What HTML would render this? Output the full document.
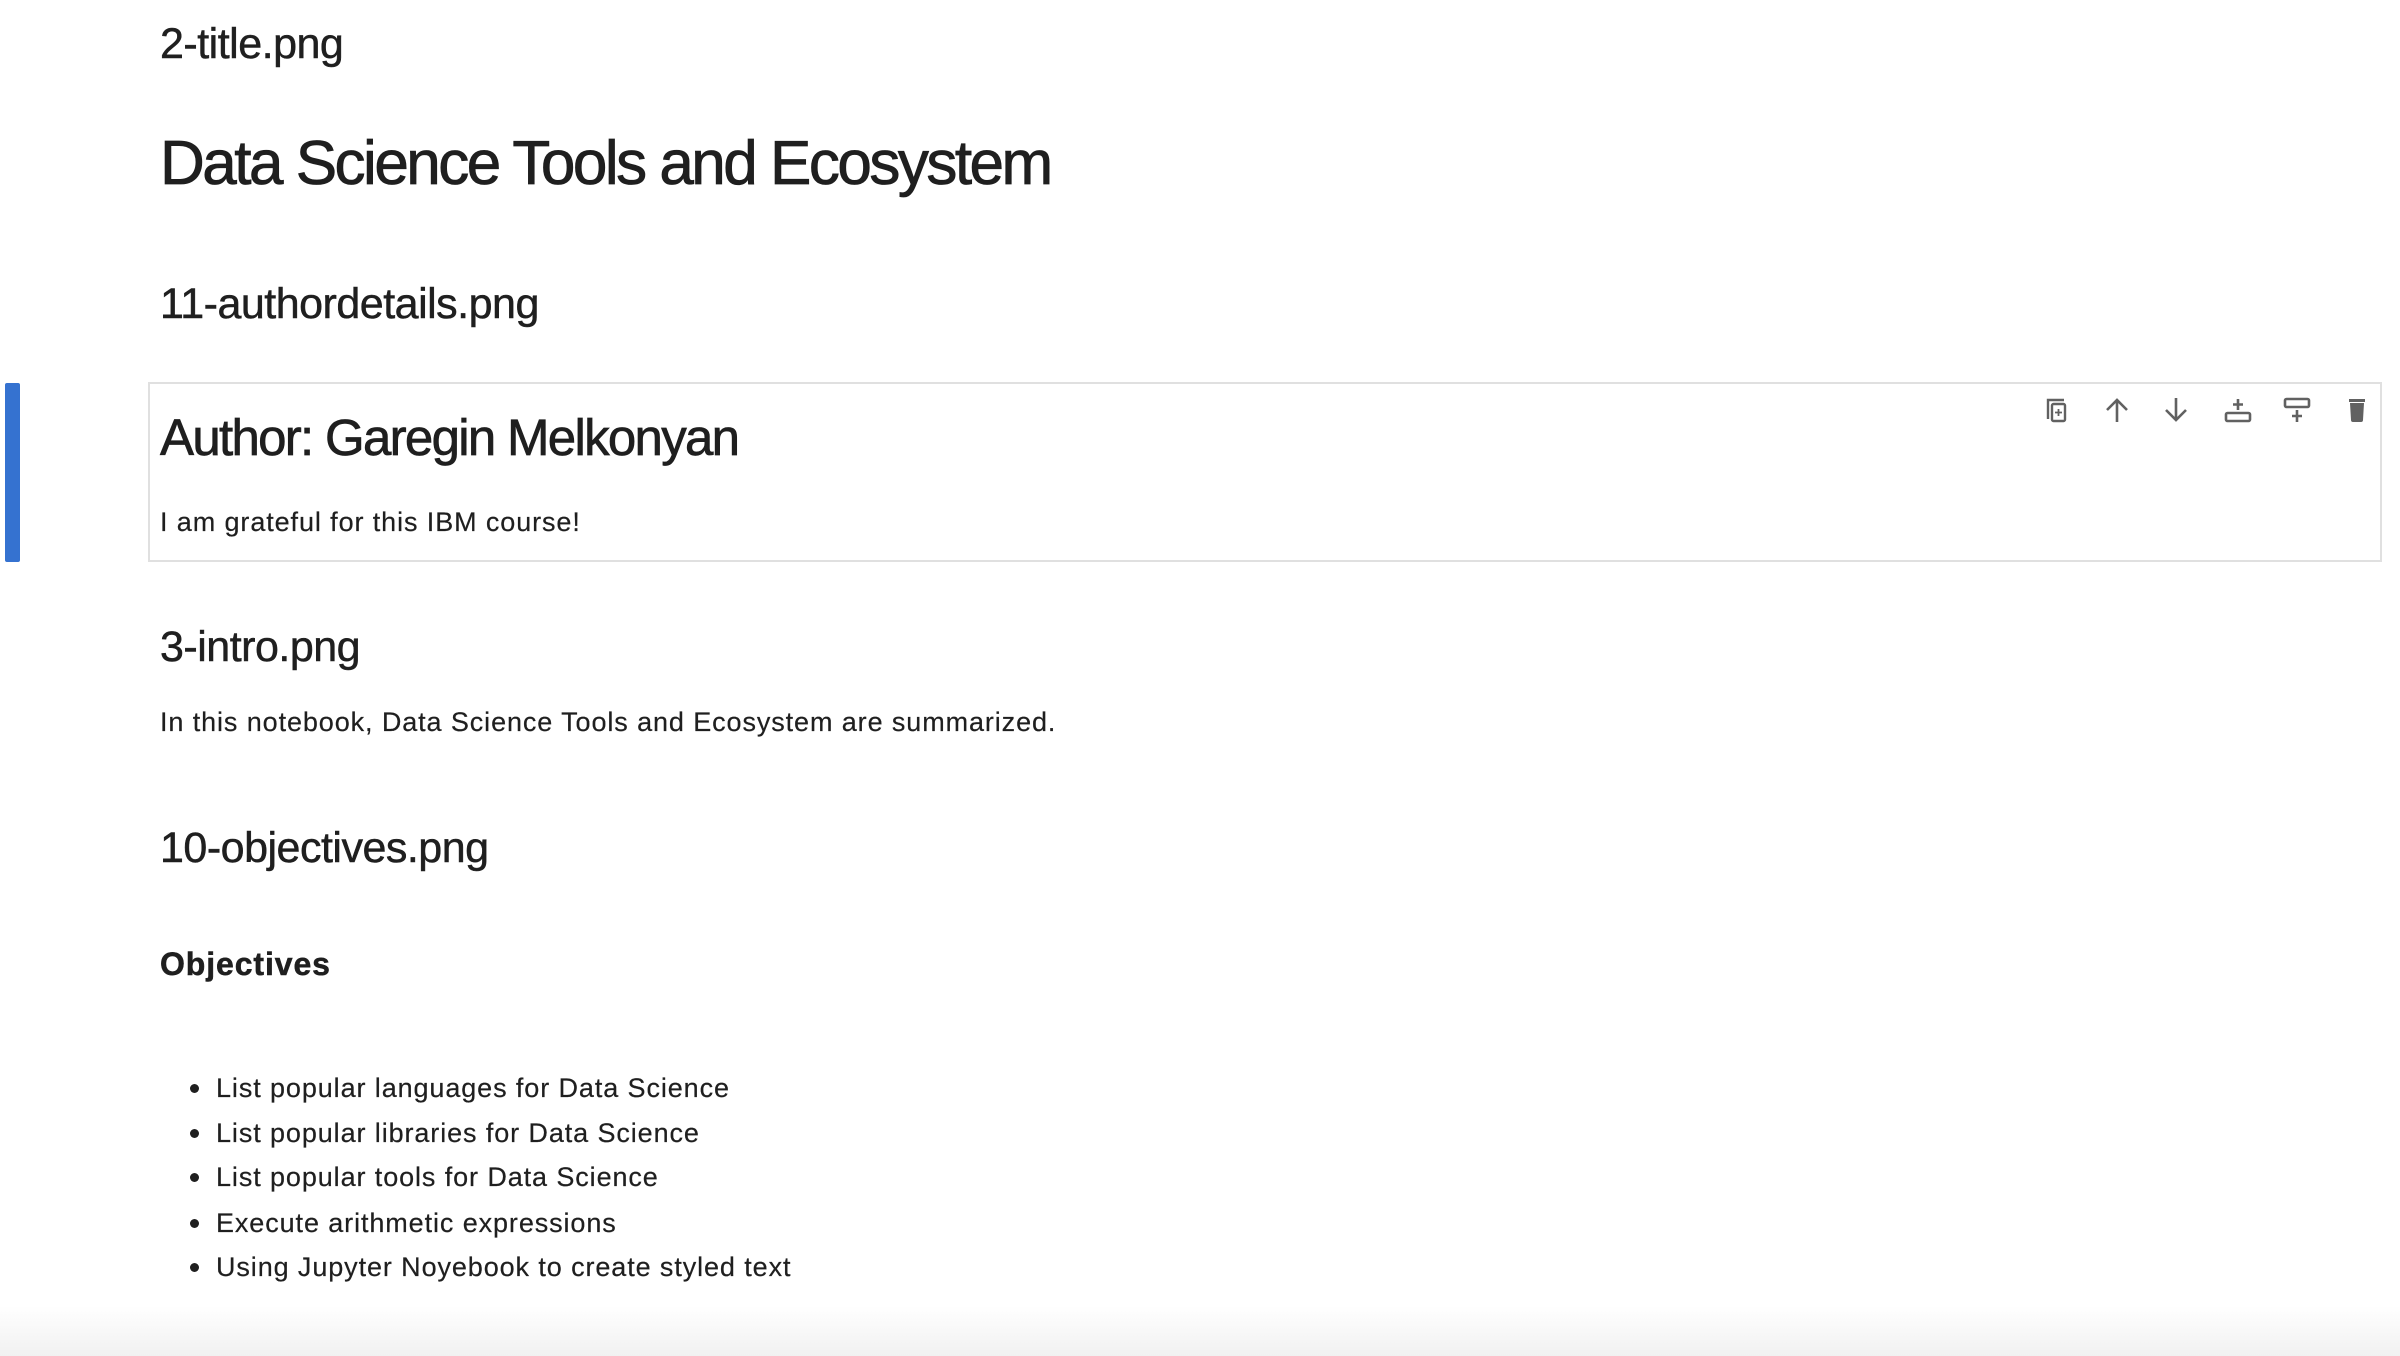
<!DOCTYPE html>
<html><head><meta charset="utf-8"><style>
html,body{margin:0;padding:0}
body{width:2400px;height:1356px;background:#fff;position:relative;overflow:hidden;font-family:"Liberation Sans",sans-serif;color:#1f1f1f}
.t{position:absolute;left:160px;white-space:nowrap;line-height:1;-webkit-text-stroke:0.5px #1f1f1f}
.h{font-size:43px;letter-spacing:-0.5px}
.p{font-size:27px;letter-spacing:0.9px;-webkit-text-stroke:0.2px #1f1f1f}
#box{position:absolute;left:148px;top:382px;width:2234px;height:180px;border:2px solid #e0e0e0;box-sizing:border-box}
#bar{position:absolute;left:5px;top:383px;width:15px;height:179px;background:#3572d0;border-radius:2px}
.ic{position:absolute;top:396px;width:28px;height:28px}
#bot{position:absolute;left:0;top:1306px;width:2400px;height:50px;background:linear-gradient(#fff,#f1f1f1)}
.b{position:absolute;left:190px;width:9px;height:9px;border-radius:50%;background:#1f1f1f}
</style></head><body>
<div class="t h" style="top:23px">2-title.png</div>
<div class="t" style="top:133px;font-size:62px;letter-spacing:-2.5px;-webkit-text-stroke:0.8px #1f1f1f">Data Science Tools and Ecosystem</div>
<div class="t h" style="top:283px">11-authordetails.png</div>
<div id="bar"></div>
<div id="box"></div>
<div class="t" style="top:412px;font-size:51px;letter-spacing:-1.7px;-webkit-text-stroke:0.7px #1f1f1f">Author: Garegin Melkonyan</div>
<div class="t p" style="top:509px">I am grateful for this IBM course!</div>
<div class="t h" style="top:626px">3-intro.png</div>
<div class="t p" style="top:709px">In this notebook, Data Science Tools and Ecosystem are summarized.</div>
<div class="t h" style="top:827px">10-objectives.png</div>
<div class="t" style="top:948px;font-size:32px;font-weight:bold;letter-spacing:0.9px">Objectives</div>
<div class="b" style="top:1084px"></div><div class="t p" style="left:216px;top:1075px">List popular languages for Data Science</div>
<div class="b" style="top:1129px"></div><div class="t p" style="left:216px;top:1120px">List popular libraries for Data Science</div>
<div class="b" style="top:1173px"></div><div class="t p" style="left:216px;top:1164px">List popular tools for Data Science</div>
<div class="b" style="top:1219px"></div><div class="t p" style="left:216px;top:1210px">Execute arithmetic expressions</div>
<div class="b" style="top:1263px"></div><div class="t p" style="left:216px;top:1254px">Using Jupyter Noyebook to create styled text</div>

<svg class="ic" style="left:2043px" viewBox="0 0 28 28" fill="none" stroke="#616161" stroke-width="2.4"><path d="M5 23V4h16"/><rect x="9" y="8" width="13" height="17" rx="1.5"/><path d="M15.5 13v7M12 16.5h7" stroke-width="1.8"/></svg>
<svg class="ic" style="left:2103px" viewBox="0 0 28 28" fill="none" stroke="#616161" stroke-width="2.6"><path d="M14 26V4M4 14L14 4l10 10"/></svg>
<svg class="ic" style="left:2162px" viewBox="0 0 28 28" fill="none" stroke="#616161" stroke-width="2.6"><path d="M14 2v22M4 14l10 10 10-10"/></svg>
<svg class="ic" style="left:2224px" viewBox="0 0 28 28" fill="none" stroke="#616161" stroke-width="2.6"><rect x="2" y="17" width="24" height="8" rx="1.5"/><path d="M14 3v11M9 8.5h10"/></svg>
<svg class="ic" style="left:2283px" viewBox="0 0 28 28" fill="none" stroke="#616161" stroke-width="2.6"><rect x="2" y="3" width="24" height="8" rx="1.5"/><path d="M14 14v12M9 20h10"/></svg>
<svg class="ic" style="left:2343px" viewBox="0 0 28 28"><path fill="#616161" d="M6 3h16v3H6z M7 7h14l-1 17a2 2 0 0 1-2 2h-8a2 2 0 0 1-2-2z"/></svg>
<div id="bot"></div>
</body></html>
